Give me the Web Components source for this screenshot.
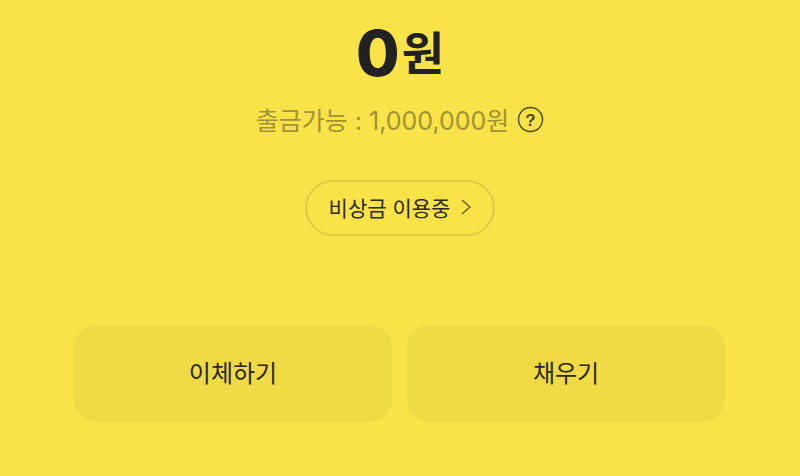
<!DOCTYPE html>
<html lang="ko">
<head>
<meta charset="utf-8">
<style>
  html, body { margin: 0; padding: 0; height: 100%; background: #fae249; }
  body { font-family: "Noto Sans CJK KR", "Liberation Sans", sans-serif; overflow: hidden; }
</style>
</head>
<body>
<template id="tpl-balance">
  <style>
    :host { display: flex; flex-direction: column; align-items: center; padding-top: 18px; }
    .amount { display: flex; align-items: flex-start; height: 70px; color: #222222; font-family: "Noto Sans CJK KR", sans-serif; }
    .num { font-family: Inter, "Liberation Sans", sans-serif; font-size: 63px; font-weight: 800; line-height: 70px; }
    .unit { font-size: 46px; font-weight: 700; line-height: 64px; margin-left: 2px; }
    .avail { display: flex; align-items: center; gap: 9px; margin-top: 7px; height: 48px; color: #a19334; font-family: Inter, "Noto Sans CJK KR", sans-serif; font-size: 25px; font-weight: 400; }
    svg { display: block; margin-left: -1px; }
  </style>
  <div class="amount"><span class="num">0</span><span class="unit">원</span></div>
  <div class="avail">
    <span>출금가능 : 1,000,000원</span>
    <svg width="27" height="27" viewBox="0 0 27 27">
      <circle cx="13.5" cy="13.5" r="12" fill="none" stroke="#4f4a1c" stroke-width="1.4"/>
      <text x="13.5" y="19.5" text-anchor="middle" font-family="Liberation Sans" font-weight="700" font-size="17" fill="#4f4a1c">?</text>
    </svg>
  </div>
</template>

<template id="tpl-pill">
  <style>
    :host { display: inline-flex; align-items: center; gap: 10px; box-sizing: border-box; width: 190px; height: 56px; padding: 0 0 2px 1px; justify-content: center; border: 2px solid #e3cb4a; border-radius: 28px; color: #2c2a14; font-size: 21px; }
    svg { display: block; }
  </style>
  <slot></slot>
  <svg width="12" height="18" viewBox="0 0 12 18"><path d="M2 2 L10 9 L2 16" fill="none" stroke="#6b6326" stroke-width="1.5"/></svg>
</template>

<template id="tpl-action">
  <style>
    :host { display: flex; align-items: center; justify-content: center; box-sizing: border-box; height: 97px; padding-bottom: 4px; background: #f0da46; border-radius: 22px; color: #2b2913; font-size: 24px; }
  </style>
  <slot></slot>
</template>

<template id="tpl-screen">
  <style>
    :host { display: flex; flex-direction: column; height: 476px; box-sizing: border-box; }
    .mid { display: flex; justify-content: center; margin-top: 37px; }
    .actions { display: grid; grid-template-columns: 318px 318px; gap: 15px; justify-content: center; margin-top: 89px; padding-right: 1px; }
  </style>
  <balance-head></balance-head>
  <div class="mid"><status-pill>비상금 이용중</status-pill></div>
  <div class="actions">
    <action-button>이체하기</action-button>
    <action-button>채우기</action-button>
  </div>
</template>

<app-screen></app-screen>

<script>
  function simple(name, tplId) {
    customElements.define(name, class extends HTMLElement {
      connectedCallback() {
        if (this.shadowRoot) return;
        this.attachShadow({ mode: 'open' });
        this.shadowRoot.append(document.getElementById(tplId).content.cloneNode(true));
      }
    });
  }
  simple('balance-head', 'tpl-balance');
  simple('status-pill', 'tpl-pill');
  simple('action-button', 'tpl-action');
  simple('app-screen', 'tpl-screen');
</script>
</body>
</html>
